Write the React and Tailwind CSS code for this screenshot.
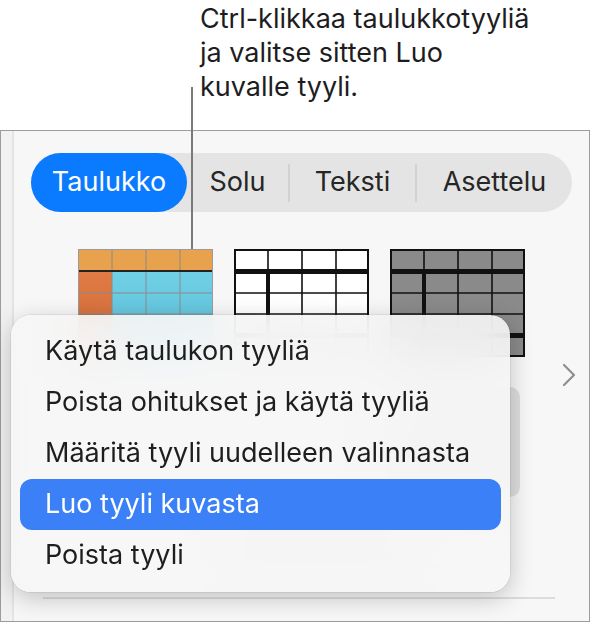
import React from 'react';
import { ChevronRight } from 'lucide-react';

const font = { fontFamily: 'Inter, "Liberation Sans", sans-serif' };

// thumbnail of a table style
const TableThumb = ({ variant }) => {
    const cols = [0, 34, 68, 102, 135];
    const rows = [0, 21, 44, 65, 86, 108];
    if (variant === 'color') {
        return (
            <svg width="135" height="108" viewBox="0 0 135 108" className="block shrink-0">
                <defs>
                    <linearGradient id="cy" x1="0" y1="0" x2="0" y2="1">
                        <stop offset="0" stopColor="#6fd0e6" />
                        <stop offset="1" stopColor="#5cbcd6" />
                    </linearGradient>
                    <linearGradient id="or" x1="0" y1="0" x2="0" y2="1">
                        <stop offset="0" stopColor="#e07b45" />
                        <stop offset="1" stopColor="#cf6a37" />
                    </linearGradient>
                </defs>
                <rect x="0" y="0" width="135" height="21" fill="#e8a14c" />
                <rect x="0" y="21" width="34" height="87" fill="url(#or)" />
                <rect x="34" y="21" width="101" height="87" fill="url(#cy)" />
                {cols.slice(1, 4).map((x) => (
                    <line key={x} x1={x} y1="0" x2={x} y2="108" stroke="#8a8a8a" strokeWidth="1" />
                ))}
                {rows.slice(2, 5).map((y) => (
                    <line key={y} x1="0" y1={y} x2="135" y2={y} stroke="#8a8a8a" strokeWidth="1" />
                ))}
                <rect x="0" y="21" width="135" height="2" fill="#222" />
                <rect x="0.5" y="0.5" width="134" height="107" fill="none" stroke="#9a9a9a" strokeWidth="1" />
            </svg>
        );
    }
    const fill = variant === 'gray' ? '#8a8a8a' : '#ffffff';
    return (
        <svg width="135" height="108" viewBox="0 0 135 108" className="block shrink-0">
            <rect x="0" y="0" width="135" height="108" fill={fill} />
            {cols.slice(1, 4).map((x) => (
                <line key={x} x1={x} y1="0" x2={x} y2="108" stroke="#111" strokeWidth="1.6" />
            ))}
            {rows.slice(2, 5).map((y) => (
                <line key={y} x1="0" y1={y} x2="135" y2={y} stroke="#111" strokeWidth="1.6" />
            ))}
            <rect x="0" y="20" width="135" height="5" fill="#111" />
            <rect x="32" y="20" width="4" height="88" fill="#111" />
            <rect x="0" y="84" width="135" height="5" fill="#111" />
            <rect x="1" y="1" width="133" height="106" fill="none" stroke="#111" strokeWidth="2" />
        </svg>
    );
};

const menuItems = [
    'Käytä taulukon tyyliä',
    'Poista ohitukset ja käytä tyyliä',
    'Määritä tyyli uudelleen valinnasta',
    'Luo tyyli kuvasta',
    'Poista tyyli',
];

export default function App() {
    return (
        <div className="relative w-[591px] h-[622px] bg-white overflow-hidden" style={font}>
            {/* callout */}
            <div className="pl-[200px] pt-[2px] h-[130px] text-[27px] leading-[34px] text-[#1d1d1f]">
                Ctrl-klikkaa taulukkotyyliä
                <br />
                ja valitse sitten Luo
                <br />
                kuvalle tyyli.
            </div>
            <div className="absolute left-[191px] top-[87px] w-[2px] h-[162px] bg-[#7a7a7a]" />

            {/* inspector panel */}
            <div className="flex w-[590px] h-[492px] border border-[#9c9c9c] bg-[#f7f7f7]">
                <div className="w-[13px] shrink-0 bg-[#f1f1f1] border-r-2 border-[#e4e4e4]" />
                <div className="w-[558px] shrink-0 flex flex-col pl-[17px]">
                    <div className="mt-[22px] w-[541px] flex items-center h-[59px] rounded-full bg-[#e4e4e4] text-[27px] text-[#262626]">
                        <div className="w-[156px] h-full rounded-full bg-[#0a7aff] text-white flex items-center justify-center">
                            Taulukko
                        </div>
                        <div className="w-[101px] flex items-center justify-center">Solu</div>
                        <div className="w-[2px] h-[38px] bg-[#d2d2d2]" />
                        <div className="w-[125px] flex items-center justify-center">Teksti</div>
                        <div className="w-[2px] h-[38px] bg-[#d2d2d2]" />
                        <div className="flex-1 flex items-center justify-center">Asettelu</div>
                    </div>

                    <div className="mt-[37px] h-[108px] flex items-start">
                        <div className="ml-[47px] flex gap-[21px]">
                            <TableThumb variant="color" />
                            <TableThumb variant="white" />
                            <TableThumb variant="gray" />
                        </div>
                        <ChevronRight className="ml-[24px] mt-[106px] shrink-0 text-[#8e8e8e]" size={40} strokeWidth={1.3} />
                    </div>

                    <div className="mt-[-30px] ml-[62px] flex gap-[54px]">
                        <div className="w-[110px] h-[14px] rounded-full bg-[#bfe0f7] blur-sm" />
                        <div className="w-[80px] h-[14px] rounded-full bg-[#d8d8d8] blur-sm" />
                        <div className="w-[100px] h-[16px] rounded-full bg-[#9a9a9a] blur-sm" />
                    </div>

                    <div className="mt-[44px] ml-[357px] w-[132px] h-[110px] rounded-[10px] bg-[#dedede]" />

                    <div className="mt-[30px] ml-[200px] flex flex-col gap-2 blur-[3px]">
                        <div className="w-[160px] h-[12px] rounded bg-[#cfcfcf]" />
                        <div className="w-[180px] h-[12px] rounded bg-[#cfcfcf]" />
                    </div>

                    <div className="mt-auto mb-[22px] ml-[12px] w-[512px] h-[2px] bg-[#dcdcdc]" />
                </div>
            </div>

            {/* context menu */}
            <div className="absolute left-[11px] top-[315px] w-[499px] h-[277px] rounded-[20px] bg-[#f6f6f6]/90 backdrop-blur-xl shadow-[0_6px_24px_rgba(0,0,0,0.22),0_0_0_1px_rgba(0,0,0,0.06)] px-[9px] py-[11px] flex flex-col">
                {menuItems.map((item) => {
                    const active = item === 'Luo tyyli kuvasta';
                    return (
                        <div
                            key={item}
                            className={`h-[51px] flex items-center pl-[25px] rounded-[12px] text-[27px] ${
                                active ? 'bg-[#3b80f6] text-white' : 'text-[#1e1e1e]'
                            }`}
                        >
                            {item}
                        </div>
                    );
                })}
            </div>
        </div>
    );
}
